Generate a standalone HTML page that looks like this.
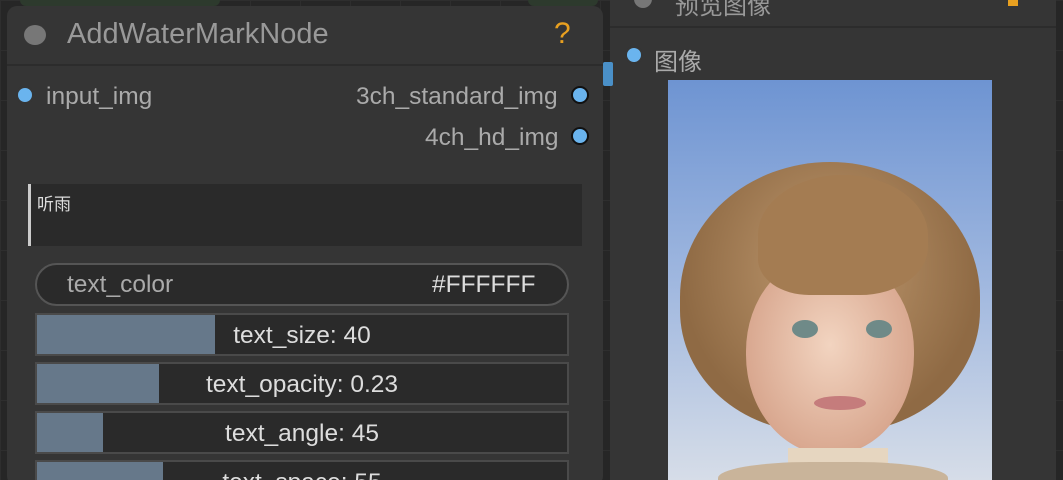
<!DOCTYPE html>
<html><head><meta charset="utf-8"><style>
*{margin:0;padding:0;box-sizing:border-box}
html,body{width:1063px;height:480px;overflow:hidden}
body{background:#262626;font-family:"Liberation Sans","Noto Sans CJK SC",sans-serif;position:relative;
background-image:linear-gradient(#2e2e2e 1px,transparent 1px),linear-gradient(90deg,#2e2e2e 1px,transparent 1px);background-size:50px 50px}
.abs{position:absolute}
.node{background:#353535;border-radius:10px}
.dot{position:absolute;width:18px;height:18px;border-radius:50%;background:#6ab4ee;border:2px solid #111}
.t{position:absolute;color:#aaa;font-size:24.5px;white-space:nowrap}
.sl{position:absolute;left:35px;width:534px;height:43px;background:#2a2a2a;border:2px solid #4a4a4a;overflow:hidden}
.sl .f{position:absolute;left:0;top:0;bottom:0;background:#66788a}
.sl .l{position:absolute;left:0;right:0;top:7px;text-align:center;color:#ddd;font-size:24.5px}
</style></head><body>
<div class="abs" style="left:20px;top:0;width:200px;height:6px;background:#2d3a2d;border-radius:0 0 6px 6px"></div>
<div class="abs" style="left:528px;top:0;width:70px;height:6px;background:#2d3a2d;border-radius:0 0 6px 6px"></div>
<div class="node abs" style="left:7px;top:6px;width:596px;height:480px"></div>
<div class="abs" style="left:7px;top:64px;width:596px;height:2px;background:#2c2c2c"></div>
<div class="abs" style="left:24px;top:25px;width:22px;height:20px;border-radius:50%;background:#777"></div>
<div class="t" style="left:67px;top:18px;font-size:29px;color:#999">AddWaterMarkNode</div>
<div class="t" style="left:554px;top:17px;font-size:30px;color:#e8a020">?</div>
<div class="dot" style="left:16px;top:86px;border-color:#353535"></div>
<div class="t" style="left:46px;top:83px">input_img</div>
<div class="t" style="left:356px;top:83px">3ch_standard_img</div>
<div class="dot" style="left:571px;top:86px"></div>
<div class="t" style="left:425px;top:124px">4ch_hd_img</div>
<div class="dot" style="left:571px;top:127px"></div>
<div class="abs" style="left:28px;top:184px;width:554px;height:62px;background:#2a2a2a;border-left:3px solid #ccc"></div>
<div class="t" style="left:37px;top:190px;font-size:17px;color:#ddd">听雨</div>
<div class="abs" style="left:35px;top:263px;width:534px;height:43px;border-radius:22px;background:#2a2a2a;border:2px solid #555"></div>
<div class="t" style="left:67px;top:271px">text_color</div>
<div class="t" style="left:432px;top:271px;color:#ddd">#FFFFFF</div>
<div class="sl" style="top:313px"><div class="f" style="width:178px"></div><div class="l">text_size: 40</div></div>
<div class="sl" style="top:362px"><div class="f" style="width:122px"></div><div class="l">text_opacity: 0.23</div></div>
<div class="sl" style="top:411px"><div class="f" style="width:66px"></div><div class="l">text_angle: 45</div></div>
<div class="sl" style="top:460px"><div class="f" style="width:126px"></div><div class="l">text_space: 55</div></div>

<div class="node abs" style="left:610px;top:-20px;width:446px;height:520px"></div>
<div class="abs" style="left:610px;top:26px;width:446px;height:2px;background:#2c2c2c"></div>
<div class="abs" style="left:634px;top:-10px;width:18px;height:18px;border-radius:50%;background:#777"></div>
<div class="t" style="left:675px;top:-14px;font-size:24px;color:#999">预览图像</div>
<div class="abs" style="left:1008px;top:0;width:10px;height:6px;background:#e8a020"></div>
<div class="abs" style="left:603px;top:62px;width:10px;height:24px;background:#4a90c8;border-radius:2px"></div>
<div class="dot" style="left:625px;top:46px;border-color:#353535"></div>
<div class="t" style="left:654px;top:42px;font-size:24px">图像</div>
<div class="abs" style="left:668px;top:80px;width:324px;height:400px;overflow:hidden;background:linear-gradient(#6e94d2,#9fb7df 50%,#d6dde8)">
 <div class="abs" style="left:12px;top:82px;width:300px;height:270px;border-radius:50% 50% 45% 45%;background:radial-gradient(ellipse at 50% 40%,#c09a70,#8f6a44 70%)"></div>
 <div class="abs" style="left:78px;top:175px;width:168px;height:200px;border-radius:48% 48% 50% 50%;background:radial-gradient(ellipse at 50% 45%,#f2d4c0,#d9a890 70%,#c08870)"></div>
 <div class="abs" style="left:90px;top:95px;width:170px;height:120px;border-radius:50% 50% 40% 30%;background:#a47c52"></div>
 <div class="abs" style="left:124px;top:240px;width:26px;height:18px;border-radius:50%;background:#6f8a88"></div>
 <div class="abs" style="left:198px;top:240px;width:26px;height:18px;border-radius:50%;background:#6f8a88"></div>
 <div class="abs" style="left:146px;top:316px;width:52px;height:14px;border-radius:50%;background:#c57c7c"></div>
 <div class="abs" style="left:120px;top:368px;width:100px;height:40px;background:#e6d6c0"></div>
 <div class="abs" style="left:50px;top:382px;width:230px;height:40px;border-radius:40% 40% 0 0;background:#c9b49a"></div>
</div>
</body></html>
